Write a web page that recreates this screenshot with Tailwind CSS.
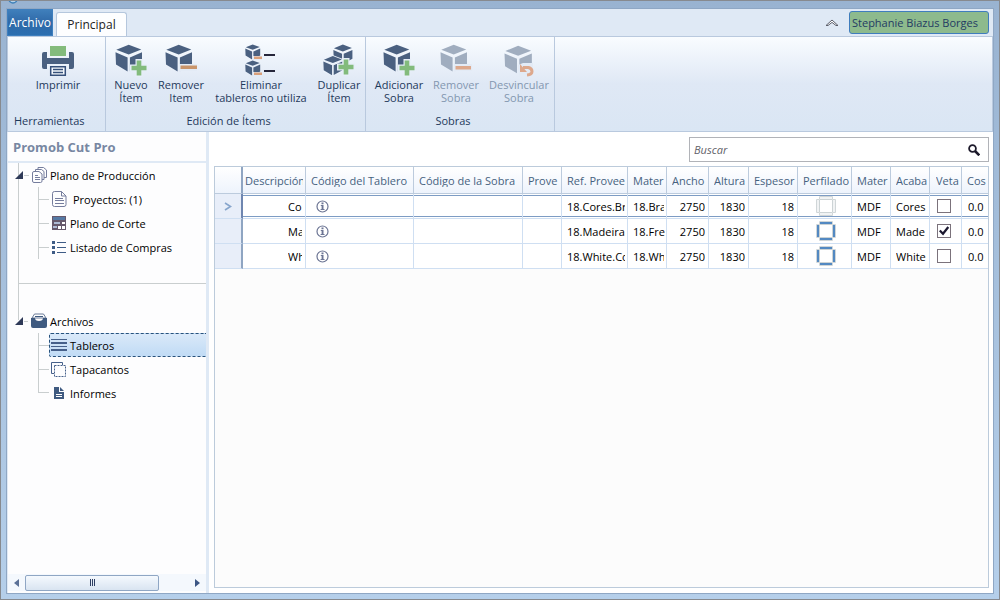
<!DOCTYPE html>
<html lang="es">
<head>
<meta charset="utf-8">
<title>Promob Cut Pro</title>
<script src="https://cdn.jsdelivr.net/npm/@tailwindcss/browser@4"></script>
</head>
<body class="h-screen overflow-hidden bg-[#a9c4e0] font-['Open_Sans','Noto_Sans',sans-serif] text-[11px] leading-[13px] text-black">

<svg class="hidden" aria-hidden="true">
  <symbol id="cube" viewBox="0 0 32 32">
    <path fill="currentColor" d="M13.7 .8 26.3 5.5 13.7 10.4 1.3 5.8ZM.5 8.2 12.6 13.4V27.5L1 20.6ZM14.9 13.4 27 8.2V20.6L14.9 27.3Z"/>
  </symbol>
  <symbol id="plus" viewBox="0 0 18 18">
    <path fill="#e6eef8" d="M5.5 0h7v5.500h5.500v7h-5.500V18h-7v-5.500H0v-7h5.500Z"/>
    <path fill="#83bb7c" d="M6.700 1.500h4.600v5.200h5.200v4.600h-5.200v5.200H6.700v-5.200H1.500V6.700h5.200Z"/>
  </symbol>
  <symbol id="profile" viewBox="0 0 20 20">
    <path fill="none" stroke="#d0d6d8" d="M3.500 .5h13v19h-13ZM.5 3.500h19v13H.5Z"/>
    <path fill="#fff" d="M3 3h14v14H3Z"/>
    <path fill="none" stroke="#ccd3d5" d="M3.500 3.500h13v13h-13Z"/>
    <path fill="none" stroke="currentColor" stroke-width="2" d="M4 2h12M4 18h12M2 4v12M18 4v12"/>
  </symbol>
  <symbol id="info" viewBox="0 0 13 13">
    <circle cx="6.500" cy="6.500" r="5.500" fill="none" stroke="#6c7594" stroke-width="1.200"/>
    <path fill="#6c7594" d="M5.500 2.600h2v1.700h-2ZM4.800 5.100h2.700v4h1v1h-3.900v-1h1V6.100h-.8Z"/>
  </symbol>
  <symbol id="tick" viewBox="0 0 14 14">
    <path fill="none" stroke="#1c1830" stroke-width="2.200" d="M2.800 6.500 6 9.800 11.300 3"/>
  </symbol>
</svg>

<div class="flex h-full flex-col border border-[#878a8f] bg-linear-to-b from-[#99b3d1] to-[#b5cfea] px-[5px] pb-[5px]">
  <div class="flex h-[7px] shrink-0 overflow-hidden pl-[2px]">
    <svg class="-mt-[7px] size-[10px]" viewBox="0 0 10 10"><circle cx="5" cy="5" r="4" fill="#b5d2ea" stroke="#3d80b9" stroke-width="1.500"/></svg>
  </div>

  <div class="flex min-h-0 flex-1 flex-col border border-[#8fa7c4] bg-white">
    <header class="flex h-[27px] shrink-0 items-end bg-[#dfe9f5]">
      <button class="h-[27px] w-[46px] self-start border border-[#3e7fbe] bg-linear-to-b from-[#3f7fbb] via-[#2f69a8] to-[#2b6fb0] pb-[1px] text-[12px] text-white">Archivo</button>
      <button class="ml-[3px] h-[24px] w-[71px] rounded-t-[3px] border border-b-0 border-[#b5c7dd] bg-[#fdfeff] text-[12px] text-[#222]">Principal</button>
      <button class="mb-[9px] ml-auto" aria-label="Contraer cinta">
        <svg class="h-[8px] w-[14px]" viewBox="0 0 14 8"><path fill="#fff" stroke="#5b5f6b" d="M1 6.500 7 1l6 5.500h-2L7 3.400 3 6.500Z"/></svg>
      </button>
      <button class="mb-[2px] ml-[10px] mr-[4px] h-[23px] w-[140px] whitespace-nowrap rounded-[3px] border border-[#3f7dbd] bg-[#8dba8d] pl-[2px] text-left text-[#243a63]">Stephanie Biazus Borges</button>
    </header>

    <nav class="flex h-[96px] shrink-0 border border-[#b9c9de] bg-linear-to-b from-[#f9fcff] via-[#dfe8f5] to-[#dae6f4] text-[#1e395b]">
      <section class="flex w-[98px] flex-col border-r border-[#b9c9de]">
        <div class="flex flex-1 pl-[21px] pt-[7px]">
          <button class="flex w-[58px] flex-col items-center">
            <svg class="h-[34px] w-[32px]" viewBox="0 0 32 34">
              <path fill="#83bb7c" d="M8 2h16v10H8Z"/>
              <path fill="#4a6080" d="M0 10q0-2 2-2h3v6h22V8h3q2 0 2 2v13q0 2-2 2h-3v-5H5v5H2q-2 0-2-2Z"/>
              <path fill="#f4f8fd" stroke="#36507a" stroke-width="1.500" d="M8.700 22.700h14.600v8.600H8.700Z"/>
              <path stroke="#36507a" stroke-width="1.500" d="M11 25.500h10M11 28.500h10"/>
            </svg>
            <span>Imprimir</span>
          </button>
        </div>
        <h2 class="pb-[4px] pl-[6px]">Herramientas</h2>
      </section>

      <section class="flex w-[260px] flex-col border-r border-[#b9c9de]">
        <div class="flex flex-1 pl-[1px] pt-[7px]">
          <button class="flex w-[48px] flex-col items-center">
            <svg class="h-[34px] w-[32px] text-[#4a6080]" viewBox="0 0 32 34"><use href="#cube" width="32" height="32"/><use href="#plus" x="15" y="15" width="18" height="18"/></svg>
            <span>Nuevo</span><span>Ítem</span>
          </button>
          <button class="flex w-[52px] flex-col items-center">
            <svg class="h-[34px] w-[32px] text-[#4a6080]" viewBox="0 0 32 34"><use href="#cube" width="32" height="32"/><path fill="#e3ebf6" d="M14 20h18v7H14Z"/><path fill="#c9956b" d="M15.500 21.500H32v3.500H15.500Z"/></svg>
            <span>Remover</span><span>Item</span>
          </button>
          <button class="flex w-[108px] flex-col items-center">
            <svg class="h-[34px] w-[32px] text-[#4a6080]" viewBox="0 0 32 34">
              <use href="#cube" x="0" y="0" width="18" height="18"/><use href="#cube" x="0" y="16" width="18" height="18"/>
              <path fill="#e3ebf6" d="M8 12h9v4H8ZM8 28h9v4H8Z"/>
              <path fill="#d9a07b" d="M9 12.500h8V15H9ZM9 28.500h8V31H9Z"/>
              <path fill="#26263a" d="M19 10h11v2H19ZM19 26h11v2H19Z"/>
            </svg>
            <span>Eliminar</span><span class="whitespace-nowrap">tableros no utiliza</span>
          </button>
          <button class="flex w-[48px] flex-col items-center">
            <svg class="h-[34px] w-[32px] text-[#4a6080]" viewBox="0 0 32 34">
              <use href="#cube" x="10" y="0" width="23" height="23"/>
              <path fill="#eaf1fa" d="m0 15 9.500-4L20 15v13l-10 4L0 28Z"/>
              <use href="#cube" x="0" y="11.500" width="23" height="23"/>
              <use href="#plus" x="14" y="14" width="18" height="18"/>
            </svg>
            <span>Duplicar</span><span>Ítem</span>
          </button>
        </div>
        <h2 class="pb-[4px] pr-[14px] text-center">Edición de Ítems</h2>
      </section>

      <section class="flex w-[189px] flex-col border-r border-[#b9c9de]">
        <div class="flex flex-1 pl-[5px] pt-[7px]">
          <button class="flex w-[56px] flex-col items-center">
            <svg class="h-[34px] w-[32px] text-[#4a6080]" viewBox="0 0 32 34"><use href="#cube" width="32" height="32"/><use href="#plus" x="15" y="15" width="18" height="18"/></svg>
            <span>Adicionar</span><span>Sobra</span>
          </button>
          <button class="flex w-[58px] flex-col items-center text-[#8397b0]" disabled>
            <svg class="h-[34px] w-[32px] text-[#a0adbf]" viewBox="0 0 32 34"><use href="#cube" width="32" height="32"/><path fill="#e3ebf6" d="M14 20h18v7H14Z"/><path fill="#dda88c" d="M15.500 22H31v3.500H15.500Z"/></svg>
            <span>Remover</span><span>Sobra</span>
          </button>
          <button class="flex w-[68px] flex-col items-center text-[#8397b0]" disabled>
            <svg class="h-[34px] w-[32px] text-[#a0adbf]" viewBox="0 0 32 34"><use href="#cube" x="1" y="1" width="33" height="33"/><path fill="#e3ebf6" d="m15 21 5-2h10v14H16Z"/><path fill="none" stroke="#dda88c" stroke-width="3" d="M20 23.500h5.500q3.500 1 3.500 4t-5 3.500"/><path fill="#dda88c" d="M17 20v8h7Z"/></svg>
            <span>Desvincular</span><span>Sobra</span>
          </button>
        </div>
        <h2 class="pb-[4px] pr-[14px] text-center">Sobras</h2>
      </section>
    </nav>

    <div class="flex min-h-0 flex-1">
      <aside class="flex w-[202px] shrink-0 flex-col border-l border-r-[3px] border-[#dfe9f5] bg-[#fdfdfe]">
        <h1 class="h-[31px] shrink-0 border-b-2 border-[#dfe9f5] pl-[5px] text-[13px] font-bold leading-[30px] text-[#7887a2]">Promob Cut Pro</h1>
        <div class="min-h-0 flex-1 overflow-hidden pl-[10px]">
          <div class="h-[121px] border-b border-l border-[#c9cecf]">
            <div class="-ml-[4px] flex h-[24px] items-center">
              <svg class="h-[8px] w-[9px]" viewBox="0 0 9 8"><path fill="#2f3a58" d="M8 0v8H0Z"/></svg>
              <span class="w-[5px] border-t border-[#c9cecf]"></span>
              <svg class="ml-[3px] size-[16px]" viewBox="0 0 16 16" fill="#fdfdfe" stroke="#757d9d"><path d="M6 .5h5.500l3 2.500v7.500H6Z"/><path d="M3.500 2.500h6l2.500 2v8H3.500Z"/><path d="M2 4.500h5l3 2.500v7q0 1.500-1.500 1.500H2Q.5 15.500.5 14V6Q.5 4.500 2 4.500ZM3 8.500h3M3 10.500h5M3 12.500h5"/></svg>
              <span class="ml-[2px]">Plano de Producción</span>
            </div>
            <ul class="ml-[19px] h-[72px] border-l border-[#c9cecf]">
              <li class="flex h-[24px] items-center"><span class="w-[10px] border-t border-[#c9cecf]"></span>
                <svg class="ml-[3px] h-[16px] w-[15px]" viewBox="0 0 15 16" fill="none" stroke="#757d9d"><path d="M2.500 .5h7l4.500 4.500v8.500q0 2-2 2H2.500q-2 0-2-2v-11q0-2 2-2ZM9.500 .5V5H14M3 7.500h8M3 9.500h9M3 12.500h9"/></svg>
                <span class="ml-[6px]">Proyectos: (1)</span></li>
              <li class="flex h-[24px] items-center"><span class="w-[10px] border-t border-[#c9cecf]"></span>
                <svg class="ml-[3px] size-[14px]" viewBox="0 0 14 14"><path fill="#66596b" d="M0 0h14v14H0Z"/><path fill="#5579a4" d="M1 1h12v3H1Z"/><path fill="#aebbd4" d="M2 6h6v2H2ZM1 10h4v2H1Z"/><path fill="#fff" d="M10 6h3v2h-3ZM6 10h3v3H6ZM10 10h3v3h-3Z"/></svg>
                <span class="ml-[4px]">Plano de Corte</span></li>
              <li class="flex h-[24px] items-center"><span class="w-[10px] border-t border-[#c9cecf]"></span>
                <svg class="ml-[3px] size-[14px]" viewBox="0 0 14 14" fill="#3e5c86"><path d="M0 1h3v3H0ZM0 6h3v3H0ZM0 11h3v3H0ZM5 2h9v1H5ZM5 7h9v1H5ZM5 12h9v1H5Z"/></svg>
                <span class="ml-[4px]">Listado de Compras</span></li>
            </ul>
          </div>
          <div class="h-[36px] w-px bg-[#c9cecf]"></div>
          <div class="-mt-[11px] -ml-[3px]">
            <div class="flex h-[24px] items-center">
              <svg class="h-[8px] w-[9px]" viewBox="0 0 9 8"><path fill="#2f3a58" d="M8 0v8H0Z"/></svg>
              <span class="w-[4px] border-t border-[#c9cecf]"></span>
              <svg class="ml-[3px] size-[16px]" viewBox="0 0 16 16"><path fill="#fff" stroke="#6a7b98" d="m1 5 2.500-4h9L15 5Z"/><path fill="#3f5a80" d="M0 5h4q0 3 4 3t4-3h4v8q0 2-2 2H2q-2 0-2-2Z"/><path fill="none" stroke="#3f5a80" d="M4 3.500h8"/></svg>
              <span class="ml-[3px]">Archivos</span>
            </div>
            <ul class="pl-[23px]">
              <li class="flex h-[24px] items-center border-l border-[#c9cecf]"><span class="w-[10px] border-t border-[#c9cecf]"></span>
                <a href="#tableros" class="flex h-[24px] flex-1 items-center rounded-l-[2px] border border-r-0 border-dashed border-[#28527c] bg-linear-to-b from-[#dae9f9] to-[#c0dbf5]">
                  <svg class="ml-[1px] h-[12px] w-[16px]" viewBox="0 0 16 12" fill="#46608a"><path d="M0 0h16v1H0ZM0 3h16v2H0ZM0 7h16v1H0ZM0 10h16v2H0Z"/></svg>
                  <span class="ml-[3px]">Tableros</span></a></li>
              <li class="flex h-[24px] items-center border-l border-[#c9cecf]"><span class="w-[10px] border-t border-[#c9cecf]"></span>
                <svg class="ml-[2px] size-[15px]" viewBox="0 0 15 15" fill="none" stroke="#46608a"><path d="M3 11.500H.5V.5h11V3"/><path stroke-dasharray="2 1" d="M3.500 3.500h11v11h-11Z"/></svg>
                <span class="ml-[4px]">Tapacantos</span></li>
              <li class="flex h-[24px]"><span class="h-[12px] w-[11px] border-b border-l border-[#c9cecf]"></span>
                <svg class="ml-[5px] mt-[6px] h-[12px] w-[10px]" viewBox="0 0 10 12"><path fill="#3f5a80" d="M0 0h5v5h5v7H0ZM6 0l4 4H6Z"/><path stroke="#fff" d="M2 7.500h6M2 9.500h6"/></svg>
                <span class="ml-[6px] mt-[6px]">Informes</span></li>
            </ul>
          </div>
        </div>
        <div class="mb-[2px] flex h-[17px] shrink-0 items-center bg-[#f4f8fd]">
          <button class="flex w-[17px] justify-center" aria-label="Desplazar a la izquierda"><svg class="h-[8px] w-[5px]" viewBox="0 0 5 8"><path fill="#5c7197" d="M5 0v8L0 4Z"/></svg></button>
          <div class="flex h-[16px] w-[134px] items-center justify-center gap-[1px] rounded-[2px] border border-[#8fa6c4] bg-linear-to-b from-[#f5f9fe] to-[#d9e4f1]">
            <i class="h-[7px] w-px bg-[#2f3f63]"></i><i class="h-[7px] w-px bg-[#2f3f63]"></i><i class="h-[7px] w-px bg-[#2f3f63]"></i>
          </div>
          <button class="ml-auto flex w-[18px] justify-center" aria-label="Desplazar a la derecha"><svg class="h-[8px] w-[5px]" viewBox="0 0 5 8"><path fill="#3c5684" d="M0 0v8l5-4Z"/></svg></button>
        </div>
      </aside>

      <main class="flex min-w-0 flex-1 flex-col pb-[5px] pl-[5px] pr-[4px] pt-[5px]">
        <label class="ml-auto flex h-[25px] w-[300px] shrink-0 items-center border border-[#b1b3b8] bg-white">
          <input type="text" placeholder="Buscar" aria-label="Buscar" class="min-w-0 flex-1 pl-[4px] italic outline-none placeholder:text-[#5f6168]">
          <svg class="mr-[8px] size-[12px]" viewBox="0 0 12 12"><circle cx="4.500" cy="4.500" r="3.400" fill="none" stroke="#1d1a2b" stroke-width="1.800"/><path stroke="#1d1a2b" stroke-width="2.600" d="m7 7 4.300 4.300"/></svg>
        </label>

        <div class="mt-[4px] min-h-0 flex-1 overflow-hidden border border-[#bccbdb] bg-[#fcfcfc]">
          <table class="w-full table-fixed border-separate border-spacing-0 whitespace-nowrap bg-white [&_td]:border-b [&_td]:border-r [&_td]:border-[#cfdff2] [&_td]:p-0 [&_th]:border-b [&_th]:border-r [&_th]:border-[#bccbdd] [&_th]:p-0 [&_th]:font-normal [&_td>div]:overflow-hidden [&_th>div]:overflow-hidden">
            <colgroup>
              <col class="w-[28px]"><col class="w-[63px]"><col class="w-[108px]"><col class="w-[109px]"><col class="w-[39px]"><col class="w-[66px]"><col class="w-[39px]"><col class="w-[42px]"><col class="w-[40px]"><col class="w-[49px]"><col class="w-[54px]"><col class="w-[39px]"><col class="w-[39px]"><col class="w-[32px]"><col>
            </colgroup>
            <thead>
              <tr class="h-[27px] bg-linear-to-b from-white to-[#edf3fc] text-left text-[#46627f]">
                <th class="border-r-2! border-r-[#8fa5c2]!"></th>
                <th><div class="mx-[2px]">Descripción</div></th>
                <th><div class="ml-[5px]">Código del Tablero</div></th>
                <th><div class="ml-[5px]">Código de la Sobra</div></th>
                <th><div class="ml-[5px]">Prove</div></th>
                <th><div class="ml-[5px]">Ref. Provee</div></th>
                <th><div class="ml-[5px]">Mater</div></th>
                <th><div class="ml-[5px]">Ancho</div></th>
                <th><div class="ml-[5px]">Altura</div></th>
                <th><div class="ml-[5px]">Espesor</div></th>
                <th><div class="ml-[5px]">Perfilado</div></th>
                <th><div class="ml-[5px]">Mater</div></th>
                <th><div class="ml-[5px]">Acaba</div></th>
                <th><div class="ml-[6px]">Veta</div></th>
                <th class="border-r-0!"><div class="ml-[5px]">Cos</div></th>
              </tr>
            </thead>
            <tbody>
              <tr class="h-[25px] [&>td:not(:first-child)]:bg-[linear-gradient(#fff_1px,#7d9cc4_1px,#7d9cc4_2px,#fff_2px,#fff_22px,#7d9cc4_22px,#7d9cc4_23px,#fff_23px)]">
                <td class="border-r-2! border-r-[#6f86b0]! bg-[#e8eef9]"><svg class="mx-auto h-[9px] w-[8px]" viewBox="0 0 8 9"><path fill="none" stroke="#87a5cc" stroke-width="1.600" d="m1 1 5.500 3.500L1 8"/></svg></td>
                <td><div class="ml-[45px] mr-[3px]">Co</div></td>
                <td><svg class="ml-[10px] size-[13px]"><use href="#info"/></svg></td>
                <td></td><td></td>
                <td><div class="ml-[5px] mr-[2px]">18.Cores.Br</div></td>
                <td><div class="ml-[5px] mr-[2px]">18.Bra</div></td>
                <td><div class="mr-[3px] text-right">2750</div></td>
                <td><div class="mr-[3px] text-right">1830</div></td>
                <td><div class="mr-[3px] text-right">18</div></td>
                <td><svg class="ml-[18px] size-[20px] text-[#f1f3f4]"><use href="#profile"/></svg></td>
                <td><div class="ml-[5px]">MDF</div></td>
                <td><div class="ml-[5px]">Cores</div></td>
                <td><label class="ml-[7px] grid size-[14px]"><input type="checkbox" aria-label="Veta Cores" class="peer col-start-1 row-start-1 size-[14px] appearance-none border border-[#7b727b] bg-white"><svg class="col-start-1 row-start-1 hidden size-[14px] peer-checked:block"><use href="#tick"/></svg></label></td>
                <td class="border-r-0!"><div class="ml-[6px]">0.0</div></td>
              </tr>
              <tr class="h-[25px]">
                <td class="border-r-2! border-r-[#8fa5c2]! bg-[#e8eef9]"></td>
                <td><div class="ml-[45px] mr-[3px]">Ma</div></td>
                <td><svg class="ml-[10px] size-[13px]"><use href="#info"/></svg></td>
                <td></td><td></td>
                <td><div class="ml-[5px]">18.Madeira</div></td>
                <td><div class="ml-[5px]">18.Fre</div></td>
                <td><div class="mr-[3px] text-right">2750</div></td>
                <td><div class="mr-[3px] text-right">1830</div></td>
                <td><div class="mr-[3px] text-right">18</div></td>
                <td><svg class="ml-[18px] size-[20px] text-[#5389c2]"><use href="#profile"/></svg></td>
                <td><div class="ml-[5px]">MDF</div></td>
                <td><div class="ml-[5px]">Made</div></td>
                <td><label class="ml-[7px] grid size-[14px]"><input type="checkbox" checked aria-label="Veta Madeira" class="peer col-start-1 row-start-1 size-[14px] appearance-none border border-[#7b727b] bg-white"><svg class="col-start-1 row-start-1 hidden size-[14px] peer-checked:block"><use href="#tick"/></svg></label></td>
                <td class="border-r-0!"><div class="ml-[6px]">0.0</div></td>
              </tr>
              <tr class="h-[25px]">
                <td class="border-r-2! border-r-[#8fa5c2]! bg-[#e8eef9]"></td>
                <td><div class="ml-[45px] mr-[3px]">Wh</div></td>
                <td><svg class="ml-[10px] size-[13px]"><use href="#info"/></svg></td>
                <td></td><td></td>
                <td><div class="ml-[5px] mr-[2px]">18.White.Co</div></td>
                <td><div class="ml-[5px] mr-[2px]">18.Wh</div></td>
                <td><div class="mr-[3px] text-right">2750</div></td>
                <td><div class="mr-[3px] text-right">1830</div></td>
                <td><div class="mr-[3px] text-right">18</div></td>
                <td><svg class="ml-[18px] size-[20px] text-[#5389c2]"><use href="#profile"/></svg></td>
                <td><div class="ml-[5px]">MDF</div></td>
                <td><div class="ml-[5px]">White</div></td>
                <td><label class="ml-[7px] grid size-[14px]"><input type="checkbox" aria-label="Veta White" class="peer col-start-1 row-start-1 size-[14px] appearance-none border border-[#7b727b] bg-white"><svg class="col-start-1 row-start-1 hidden size-[14px] peer-checked:block"><use href="#tick"/></svg></label></td>
                <td class="border-r-0!"><div class="ml-[6px]">0.0</div></td>
              </tr>
            </tbody>
          </table>
        </div>
      </main>
    </div>
  </div>
</div>
</body>
</html>
